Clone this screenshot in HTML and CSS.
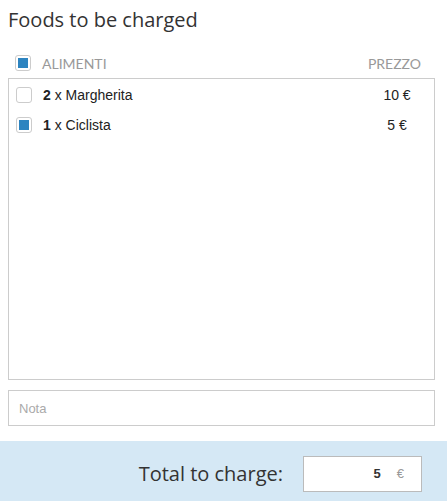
FILE: index.html
```html
<!DOCTYPE html>
<html lang="en">
<head>
    <meta charset="UTF-8">
    <title>Foods to be charged</title>
    <link rel="stylesheet" href="styles.css">
</head>
<body>
    <div class="content">
        <h1>Foods to be charged</h1>

        <!-- column headers -->
        <div class="list-head">
            <span class="check checked"></span>
            <span class="head-name">ALIMENTI</span>
            <span class="head-price">PREZZO</span>
        </div>

        <!-- food list -->
        <div class="list">
            <div class="row">
                <span class="check"></span>
                <span class="name"><b>2</b> x Margherita</span>
                <span class="price">10 €</span>
            </div>
            <div class="row">
                <span class="check checked"></span>
                <span class="name"><b>1</b> x Ciclista</span>
                <span class="price">5 €</span>
            </div>
        </div>

        <input class="note" type="text" placeholder="Nota">
    </div>

    <div class="footer">
        <span class="total-label">Total to charge:</span>
        <div class="total-box">
            <span class="total-value">5</span>
            <span class="total-cur">€</span>
        </div>
    </div>
</body>
</html>
```

FILE: styles.css
```css
body {
    margin: 0;
    padding: 0;
    background-color: #fff;
    color: #333;
    font-family: "Liberation Sans", Arial, sans-serif;
}
.content {
    padding: 0 12px 0 8px;
}
h1 {
    font-family: "Open Sans", sans-serif;
    font-weight: 400;
    font-size: 20px;
    line-height: 28px;
    margin: 0;
    padding-top: 6px;
    color: #333;
}
.list-head {
    display: flex;
    align-items: center;
    height: 30px;
    margin-top: 14px;
    padding-left: 7px;
    padding-right: 14px;
    font-family: "Lato", sans-serif;
    font-size: 14px;
    color: #999;
}
.head-name {
    flex: 1;
    margin-left: 11px;
}
.check {
    box-sizing: border-box;
    width: 16px;
    height: 16px;
    border: 1px solid #ccc;
    border-radius: 3px;
    background: #fff;
    padding: 2px;
    flex: none;
}
.check.checked::after {
    content: "";
    display: block;
    width: 10px;
    height: 10px;
    background-color: #2d84c0;
}
.list {
    box-sizing: border-box;
    height: 302px;
    border: 1px solid #ccc;
    padding-top: 1px;
}
.row {
    display: flex;
    align-items: center;
    height: 30px;
    padding-left: 7px;
    font-size: 14px;
    color: #222;
}
.name {
    flex: 1;
    margin-left: 11px;
}
.price {
    width: 60px;
    text-align: center;
    margin-right: 7px;
}
.note {
    display: block;
    box-sizing: border-box;
    width: 100%;
    height: 36px;
    margin-top: 10px;
    border: 1px solid #ccc;
    padding: 0 10px;
    font-family: "Liberation Sans", Arial, sans-serif;
    font-size: 13px;
    outline: none;
}
.note::placeholder {
    color: #aaa;
}
.footer {
    box-sizing: border-box;
    display: flex;
    justify-content: flex-end;
    align-items: center;
    height: 60px;
    margin-top: 15px;
    padding: 5px 25px 0 0;
    background-color: #d5e8f5;
}
.total-label {
    font-family: "Open Sans", sans-serif;
    font-size: 20px;
    color: #333;
    margin-right: 20px;
}
.total-box {
    box-sizing: border-box;
    display: flex;
    align-items: center;
    justify-content: flex-end;
    width: 119px;
    height: 36px;
    background: #fff;
    border: 1px solid #bbb;
    padding-right: 17px;
    font-size: 13px;
}
.total-value {
    font-weight: bold;
    color: #333;
}
.total-cur {
    color: #999;
    margin-left: 16px;
}
```
